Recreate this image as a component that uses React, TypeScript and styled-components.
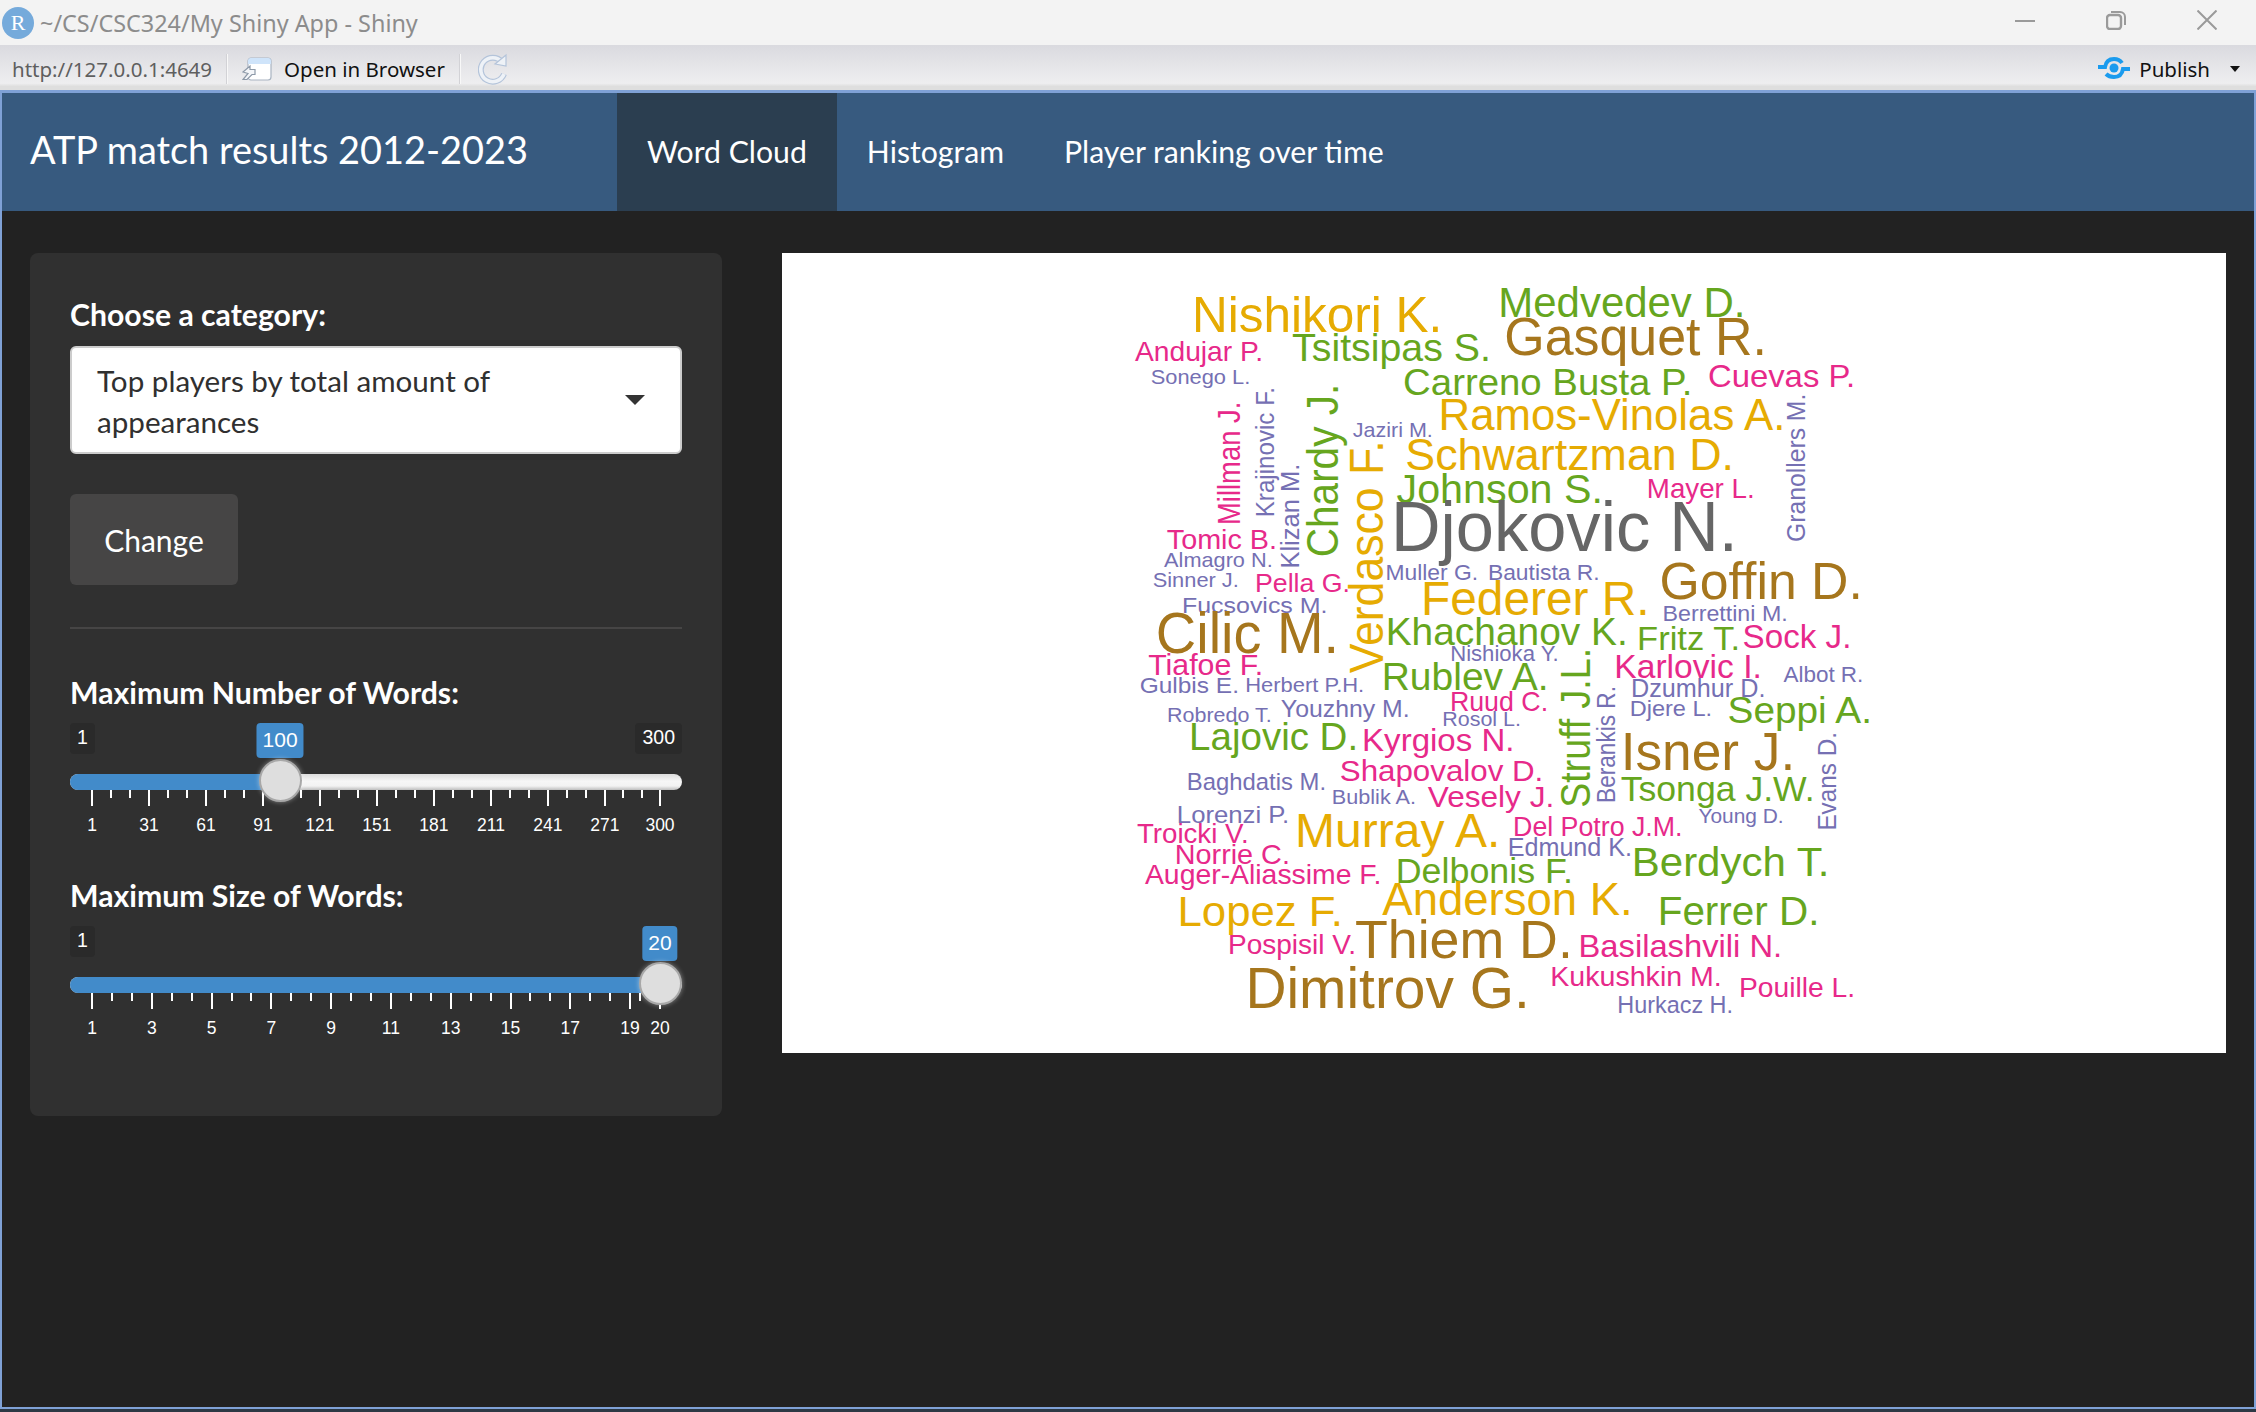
import React from "react";
import styled, { createGlobalStyle } from "styled-components";

const Global = createGlobalStyle`
  html, body { margin: 0; padding: 0; background: #222; }
  * { box-sizing: border-box; }
`;

const Shell = styled.div`
  width: 2256px; height: 1412px; display: flex; flex-direction: column; overflow: hidden;
  font-family: Lato, sans-serif; background: #2c3844; padding-bottom: 3px;
`;
const TitleBar = styled.header`
  height: 45px; background: #f3f3f3; display: flex; align-items: center; padding-left: 2px; flex: none;
`;
const RLogo = styled.div`
  width: 32px; height: 32px; border-radius: 50%; background: #75aadb; color: #fff;
  font: 22px "Liberation Serif", serif; display: flex; align-items: center; justify-content: center; margin-right: 6px;
`;
const WindowTitle = styled.span`
  font: 23.4px "Noto Sans", sans-serif; color: #8c8c8c; flex: 1;
`;
const WindowButtons = styled.div`
  display: flex; align-items: center; padding-right: 39px; gap: 71px; margin-top: -5px;
`;
const ToolBar = styled.div`
  height: 45px; flex: none; display: flex; align-items: center; padding: 3px 16px 0 12px;
  background: linear-gradient(#dadadf, #eeeef0 85%, #dedede 92%, #dedede);
`;
const Url = styled.span` font: 20.5px "Noto Sans", sans-serif; color: #5f5f5f; `;
const Sep = styled.span`
  width: 2px; height: 30px; background: #d2d2d6; border-right: 1px solid #f8f8f8; margin: 0 14px;
`;
const ToolText = styled.span` font: 20.5px "Noto Sans", sans-serif; color: #111; `;
const Spacer = styled.div` flex: 1; `;
const Frame = styled.div`
  flex: 1; display: flex; flex-direction: column; background: #222;
  border: solid #7fa1d6; border-width: 3px 2px 2px 2px;
`;
const NavBar = styled.nav`
  height: 118px; flex: none; background: #375a7f; display: flex; align-items: stretch;
`;
const Brand = styled.div`
  width: 615px; padding: 0 0 5px 28px; display: flex; align-items: center; color: #fff; font-size: 37.9px;
`;
const Tab = styled.div<{ $active?: boolean }>`
  padding: 0 30px 2px; display: flex; align-items: center; color: #fff; font-size: 30.2px;
  background: ${(p) => (p.$active ? "#2b3e50" : "transparent")};
`;
const Body = styled.main`
  flex: 1; display: grid; grid-template-columns: 692px 1444px; gap: 60px; align-items: start; padding: 42px 28px 0;
`;
const Sidebar = styled.aside`
  height: 863px; background: #303030; border-radius: 8px; padding: 43px 40px 0;
`;
const Label = styled.div`
  font-size: 30.2px; font-weight: 700; color: #fff; line-height: 36px; white-space: nowrap;
`;
const Select = styled.div`
  margin-top: 14px; height: 108px; width: 612px; background: #fff; border: 2px solid #ccc; border-radius: 6px;
  padding: 14px 25px 12px; display: flex; align-items: center; justify-content: space-between;
`;
const SelectText = styled.div`
  width: 470px; font-size: 29.6px; line-height: 41px; color: #303030;
`;
const Caret = styled.span`
  width: 0; height: 0; border-left: 10px solid transparent; border-right: 10px solid transparent;
  border-top: 10px solid #333; margin-right: 10px; margin-top: -2px;
`;
const ChangeButton = styled.button`
  display: block; margin-top: 40px; width: 168px; height: 91px; background: #464545; border: 0; border-radius: 6px;
  color: #fff; font: 30px Lato, sans-serif; padding: 0;
`;
const Rule = styled.hr`
  margin: 42px 0 45px; border: 0; height: 2px; background: #464545;
`;
const SliderBlock = styled.section`
  height: 203px;
`;
const SliderArea = styled.div`
  position: relative; height: 130px; margin-top: 14px;
`;
const EndLabel = styled.span<{ $right?: boolean }>`
  position: absolute; top: -1px; ${(p) => (p.$right ? "right: 0;" : "left: 0;")}
  height: 31px; padding: 0 7px; background: #2a2a2a; border-radius: 4px; color: #fff;
  font: 19.5px/28px "Liberation Sans", sans-serif;
`;
const ValueLabel = styled.span`
  position: absolute; top: -1px; height: 35px; padding: 0 6px; transform: translateX(-50%); background: #428bca; border-radius: 4px;
  color: #fff; font: 21px/33px "Liberation Sans", sans-serif;
`;
const Track = styled.div`
  position: absolute; left: 0; right: 0; top: 50px; height: 16px; border-radius: 8px; overflow: hidden;
  background: linear-gradient(#dcdcdc, #f6f6f6 45%, #f2f2f2 75%, #bdbdbd);
`;
const Fill = styled.div`
  height: 100%; background: #428bca;
`;
const Handle = styled.div`
  position: absolute; top: 35px; width: 43px; height: 43px; margin-left: -21.5px; border-radius: 50%;
  background: #dedede; border: 2px solid #a8a8a8; box-shadow: 0 0 5px rgba(255, 255, 255, 0.45);
`;
const Tick = styled.span<{ $major?: boolean }>`
  position: absolute; top: 66px; width: 2px; height: ${(p) => (p.$major ? 16 : 8)}px; background: #fff;
`;
const TickLabel = styled.span`
  position: absolute; top: 91px; transform: translateX(-50%); color: #fff; font: 17.5px/20px "Liberation Sans", sans-serif;
`;
const Plot = styled.div`
  height: 800px; background: #fff; overflow: hidden; display: flex;
`;
const Cloud = styled.svg`
  width: 100%; height: 100%; font-family: "Liberation Sans", Arial, sans-serif;
`;

const C: Record<string, string> = { o: "#e6ab02", g: "#66a61e", b: "#a6761d", p: "#e7298a", v: "#7570b3", k: "#666666" };

type H = [string, number, number, number, number, string];
const upper: H[] = [
  ["Nishikori K.", 190, 683, 215, 103, "o"], ["Medvedev D.", 805, 1293, 170, 88, "g"], ["Gasquet R.", 818, 1335, 283, 108, "b"],
  ["Andujar P.", 73, 325, 302, 56, "p"], ["Tsitsipas S.", 390, 782, 300, 80, "g"], ["Sonego L.", 104, 300, 370, 43, "v"],
  ["Carreno Busta P.", 613, 1187, 403, 76, "g"], ["Cuevas P.", 1225, 1515, 378, 63, "p"], ["Ramos-Vinolas A.", 685, 1373, 507, 92, "o"],
  ["Jaziri M.", 510, 667, 530, 40, "v"], ["Schwartzman D.", 618, 1270, 627, 90, "o"], ["Johnson S.", 600, 1007, 727, 82, "g"],
  ["Mayer L.", 1102, 1313, 713, 58, "p"], ["Djokovic N.", 592, 1275, 870, 145, "k"], ["Tomic B.", 137, 353, 865, 57, "p"],
  ["Almagro N.", 131, 345, 918, 43, "v"], ["Sinner J.", 108, 277, 980, 43, "v"], ["Pella G.", 314, 500, 995, 52, "p"],
  ["Muller G.", 576, 758, 957, 45, "v"], ["Bautista R.", 782, 1002, 957, 45, "v"], ["Goffin D.", 1130, 1528, 1015, 107, "b"],
  ["Federer R.", 650, 1100, 1063, 98, "o"], ["Fucsovics M.", 167, 455, 1058, 46, "v"],
];
const lower: H[] = [
  ["Berrettini M.", 1133, 1380, 60, 46, "v"], ["Cilic M.", 118, 475, 157, 117, "b"], ["Khachanov K.", 578, 1057, 133, 78, "g"],
  ["Fritz T.", 1083, 1283, 147, 69, "g"], ["Sock J.", 1295, 1507, 143, 68, "p"], ["Nishioka Y.", 706, 920, 182, 44, "v"],
  ["Tiafoe F.", 100, 325, 222, 62, "p"], ["Karlovic I.", 1037, 1327, 232, 67, "p"], ["Albot R.", 1376, 1532, 245, 47, "v"],
  ["Gulbis E.", 82, 277, 277, 47, "v"], ["Herbert P.H.", 294, 529, 275, 43, "v"], ["Rublev A.", 570, 898, 268, 78, "g"],
  ["Dzumhur D.", 1070, 1335, 288, 51, "v"], ["Ruud C.", 706, 898, 332, 55, "p"], ["Youzhny M.", 366, 620, 348, 50, "v"],
  ["Robredo T.", 137, 343, 365, 43, "v"], ["Djere L.", 1067, 1228, 345, 47, "v"], ["Seppi A.", 1265, 1548, 368, 75, "g"],
  ["Rosol L.", 690, 844, 377, 42, "v"], ["Lajovic D.", 183, 515, 448, 78, "g"], ["Kyrgios N.", 530, 830, 450, 65, "p"],
  ["Isner J.", 1052, 1392, 507, 110, "b"], ["Shapovalov D.", 485, 888, 540, 62, "p"], ["Baghdatis M.", 177, 452, 568, 48, "v"],
  ["Tsonga J.W.", 1050, 1433, 600, 70, "g"], ["Bublik A.", 468, 633, 610, 42, "v"], ["Vesely J.", 662, 910, 620, 62, "p"],
  ["Lorenzi P.", 157, 378, 668, 50, "v"], ["Young D.", 1205, 1372, 668, 43, "v"], ["Murray A.", 397, 800, 738, 98, "o"],
  ["Del Potro J.M.", 833, 1168, 705, 55, "p"], ["Troicki V.", 77, 296, 727, 57, "p"], ["Edmund K.", 822, 1067, 765, 52, "v"],
  ["Norrie C.", 153, 379, 790, 55, "p"], ["Berdych T.", 1073, 1462, 825, 85, "g"], ["Auger-Aliassime F.", 93, 563, 850, 55, "p"],
  ["Delbonis F.", 598, 947, 848, 73, "g"], ["Anderson K.", 572, 1066, 943, 93, "o"], ["Lopez F.", 160, 484, 975, 87, "o"],
  ["Ferrer D.", 1125, 1442, 972, 82, "g"], ["Thiem D.", 518, 945, 1072, 110, "b"], ["Pospisil V.", 260, 512, 1060, 57, "p"],
  ["Basilashvili N.", 965, 1368, 1070, 65, "p"], ["Dimitrov G.", 298, 858, 1222, 117, "b"], ["Kukushkin M.", 908, 1247, 1155, 58, "p"],
  ["Pouille L.", 1287, 1515, 1188, 55, "p"], ["Hurkacz H.", 1042, 1270, 1238, 48, "v"],
];
// name, baseline x, bottom y, top y, glyph height, colour, y origin
type V = [string, number, number, number, number, string, number];
const vertical: V[] = [
  ["Millman J.", 282, 790, 430, 44, "p", 260], ["Krajinovic F.", 350, 768, 385, 35, "v", 260], ["Klizan M.", 400, 922, 615, 35, "v", 260],
  ["Chardy J.", 478, 885, 378, 60, "g", 260], ["Verdasco F.", 568, 1233, 548, 65, "o", 260], ["Granollers M.", 1418, 842, 405, 36, "v", 260],
  ["Struff J.L.", 985, 617, 150, 57, "g", 600], ["Berankis R.", 1035, 605, 262, 35, "v", 600], ["Evans D.", 1480, 688, 400, 35, "v", 600],
];
const px = (z: number) => 1100 + z / 2.01;

const WordCloud = () => (
  <Cloud viewBox="782 253 1444 800">
    {[[upper, 260], [lower, 600]].flatMap(([list, o]) =>
      (list as H[]).map(([t, x0, x1, base, h, c]) => {
        const fs = (h / 3 / 0.716) * 1.05;
        return (
          <text key={t} x={px(x0) - fs * 0.05} y={(o as number) + base / 3 + 0.5} fontSize={fs} fill={C[c]}
            textLength={(x1 - x0) / 2.01 + fs * 0.1} lengthAdjust="spacingAndGlyphs">{t}</text>
        );
      })
    )}
    {vertical.map(([t, bx, y0, y1, h, c, o]) => {
      const fs = (h / 2.01 / 0.716) * 1.05;
      return (
        <text key={t} transform={`translate(${px(bx)} ${o + y0 / 3 + fs * 0.05}) rotate(-90)`} fontSize={fs} fill={C[c]}
          textLength={(y0 - y1) / 3 + fs * 0.1} lengthAdjust="spacingAndGlyphs">{t}</text>
      );
    })}
  </Cloud>
);

const TICK0 = 22, TICK_SPAN = 568;
function Slider({ min, max, value, marks }: { min: number; max: number; value: number; marks: number[] }) {
  const pos = (v: number) => TICK0 + ((v - min) / (max - min)) * TICK_SPAN;
  const minors = marks.slice(0, -1).flatMap((m, i) => {
    const a = pos(m), b = pos(marks[i + 1]);
    return [a + (b - a) / 3, a + (2 * (b - a)) / 3];
  });
  const atEnd = value === max;
  return (
    <SliderArea>
      <EndLabel>1</EndLabel>
      {!atEnd && <EndLabel $right>{max}</EndLabel>}
      <ValueLabel style={{ left: pos(value) }}>{value}</ValueLabel>
      <Track><Fill style={{ width: pos(value) }} /></Track>
      {marks.map((m) => <Tick key={m} $major style={{ left: pos(m) - 1 }} />)}
      {minors.map((m) => <Tick key={m} style={{ left: m - 1 }} />)}
      {marks.map((m) => <TickLabel key={m} style={{ left: pos(m) }}>{m}</TickLabel>)}
      <Handle style={{ left: pos(value) }} />
    </SliderArea>
  );
}

const Stroke = { fill: "none", stroke: "#9a9a9a", strokeWidth: 2 };

export default function App() {
  return (
    <Shell>
      <Global />
      <TitleBar>
        <RLogo>R</RLogo>
        <WindowTitle>~/CS/CSC324/My Shiny App - Shiny</WindowTitle>
        <WindowButtons>
          <svg width="20" height="20" viewBox="0 0 20 20"><path d="M0 11H20" {...Stroke} /></svg>
          <svg width="20" height="20" viewBox="0 0 20 20"><rect x="1" y="5" width="14" height="14" rx="3" {...Stroke} strokeWidth={2.4} /><path d="M5 2h9a5 5 0 0 1 5 5v8" {...Stroke} /></svg>
          <svg width="20" height="20" viewBox="0 0 20 20"><path d="M0.5 0.5L19.5 19.5M19.5 0.5L0.5 19.5" {...Stroke} /></svg>
        </WindowButtons>
      </TitleBar>
      <ToolBar>
        <Url>http://127.0.0.1:4649</Url>
        <Sep />
        <svg width="30" height="24" viewBox="0 0 30 24" style={{ marginRight: 12 }}>
          <rect x="6" y="1" width="23" height="22" rx="3" fill="#fff" stroke="#a9b4c2" strokeWidth="1.2" />
          <path d="M6 7V4a3 3 0 0 1 3-3h17a3 3 0 0 1 3 3v3z" fill="#cfe4fa" />
          <path d="M1 15l7-6v3.5h5v5h-3l-5 5H1l5-6z" fill="#f4f6f9" stroke="#8d99a8" strokeWidth="1.2" />
        </svg>
        <ToolText>Open in Browser</ToolText>
        <Sep />
        <svg width="30" height="32" viewBox="0 0 30 32" style={{ marginLeft: 3 }}>
          <path d="M24 9A12 12 0 1 0 26 21" fill="none" stroke="#b4c4da" strokeWidth="6" />
          <path d="M24 9A12 12 0 1 0 26 21" fill="none" stroke="#eef2f7" strokeWidth="3.6" />
          <path d="M17 11l11 2V2z" fill="#eef2f7" stroke="#b4c4da" strokeWidth="1.2" />
        </svg>
        <Spacer />
        <svg width="32" height="24" viewBox="0 0 32 24" style={{ marginRight: 9, marginTop: -2 }}>
          <circle cx="16" cy="12" r="4.5" fill="#1a9bee" />
          <path d="M0 11H7C8 5 12 3 16 3C19 3 22 4 24 7M32 13H25C24 19 20 21 16 21C13 21 10 20 8 18" fill="none" stroke="#1a9bee" strokeWidth="4" />
        </svg>
        <ToolText>Publish</ToolText>
        <svg width="10" height="6" viewBox="0 0 10 6" style={{ marginLeft: 20 }}><path d="M0 0H10L5 6z" fill="#111" /></svg>
      </ToolBar>
      <Frame>
        <NavBar>
          <Brand>ATP match results 2012-2023</Brand>
          <Tab $active>Word Cloud</Tab>
          <Tab>Histogram</Tab>
          <Tab>Player ranking over time</Tab>
        </NavBar>
        <Body>
          <Sidebar>
            <Label>Choose a category:</Label>
            <Select>
              <SelectText>Top players by total amount of appearances</SelectText>
              <Caret />
            </Select>
            <ChangeButton>Change</ChangeButton>
            <Rule />
            <SliderBlock>
              <Label>Maximum Number of Words:</Label>
              <Slider min={1} max={300} value={100} marks={[1, 31, 61, 91, 121, 151, 181, 211, 241, 271, 300]} />
            </SliderBlock>
            <SliderBlock>
              <Label>Maximum Size of Words:</Label>
              <Slider min={1} max={20} value={20} marks={[1, 3, 5, 7, 9, 11, 13, 15, 17, 19, 20]} />
            </SliderBlock>
          </Sidebar>
          <Plot><WordCloud /></Plot>
        </Body>
      </Frame>
    </Shell>
  );
}
